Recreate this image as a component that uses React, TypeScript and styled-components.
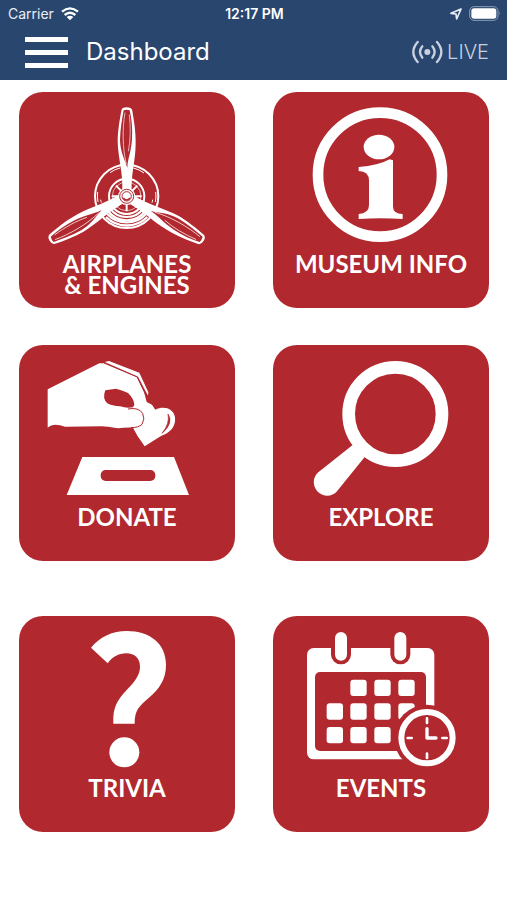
import React from "react";
import styled, { createGlobalStyle } from "styled-components";

const RED = "#b1282f";
const NAVY = "#29466f";

const GlobalStyle = createGlobalStyle`
  *, *::before, *::after { box-sizing: border-box; }
  body { margin: 0; background: #fff; font-family: Inter, "Liberation Sans", sans-serif; }
`;

const Header = styled.header`
  background: ${NAVY};
  color: #fff;
`;

const StatusBar = styled.div`
  display: grid;
  grid-template-columns: 1fr auto 1fr;
  align-items: center;
  height: 27px;
  padding: 0 6px 0 8px;
  font-size: 14px;
  color: #e9eef6;
`;

const StatusGroup = styled.div<{ $end?: boolean }>`
  display: flex;
  align-items: center;
  gap: 7px;
  justify-content: ${(p) => (p.$end ? "flex-end" : "flex-start")};
`;

const Clock = styled.time`
  font-size: 14px;
  font-weight: 600;
  color: #fff;
`;

const NavBar = styled.div`
  display: flex;
  align-items: center;
  height: 53px;
  padding: 0 18px 3px 25px;
`;

const MenuButton = styled.button`
  display: flex;
  flex-direction: column;
  gap: 8px;
  width: 43px;
  padding: 0;
  border: 0;
  background: none;
  cursor: pointer;
`;

const MenuBar = styled.span`
  height: 5px;
  background: #fff;
`;

const Title = styled.h1`
  flex: 1;
  margin: 0 0 0 18px;
  font-family: Inter, sans-serif;
  font-size: 24px;
  font-weight: 400;
  line-height: 32px;
`;

const LiveButton = styled.button`
  display: flex;
  align-items: center;
  gap: 4px;
  padding: 0;
  border: 0;
  background: none;
  color: #c9d1dd;
  font-family: Inter, sans-serif;
  font-size: 20px;
  font-weight: 300;
  line-height: 24px;
  cursor: pointer;
`;

const Board = styled.main`
  display: flex;
  flex-direction: column;
  padding: 12px 18px 68px 19px;
`;

const Row = styled.div<{ $gap: number }>`
  display: grid;
  grid-template-columns: 1fr 1fr;
  column-gap: 38px;
  margin-top: ${(p) => p.$gap}px;
`;

const Tile = styled.a`
  display: flex;
  flex-direction: column;
  aspect-ratio: 1;
  border-radius: 24px;
  overflow: hidden;
  background: ${RED};
  color: #fff;
  text-decoration: none;
`;

const Art = styled.svg`
  display: block;
  width: 100%;
  aspect-ratio: 648 / 483;
`;

const Label = styled.span`
  font-family: Lato, sans-serif;
  font-size: 24px;
  font-weight: 700;
  line-height: 21px;
  text-align: center;
  white-space: pre-line;
`;

const Wifi = () => (
  <svg width="18" height="14" viewBox="0 0 54 42" aria-hidden="true">
    <g fill="none" stroke="#fff" strokeWidth="7">
      <path d="M3 14 Q27 -6 51 14" />
      <path d="M11 24 Q27 10 43 24" />
    </g>
    <path d="M17 30 Q27 22 37 30 L27 40 Z" fill="#fff" />
  </svg>
);

const LocationArrow = () => (
  <svg width="12" height="12" viewBox="0 0 36 36" aria-hidden="true">
    <path d="M33 3 L3 16 L18 18 L20 33 Z" fill="none" stroke="#e9eef6" strokeWidth="5" strokeLinejoin="round" />
  </svg>
);

const Battery = () => (
  <svg width="32" height="15" viewBox="0 0 96 45" aria-hidden="true">
    <rect x="2" y="2" width="85" height="41" rx="13" fill="none" stroke="#8b9cb6" strokeWidth="3" />
    <rect x="7" y="7" width="75" height="31" rx="8" fill="#fff" />
    <path d="M90 16 Q95 22 90 29 Z" fill="#8b9cb6" />
  </svg>
);

const Broadcast = () => (
  <svg width="31" height="24" viewBox="0 0 93 72" aria-hidden="true">
    <circle cx="46" cy="36" r="9" fill="#c9d1dd" />
    <g fill="none" stroke="#c9d1dd" strokeWidth="7" strokeLinecap="round">
      <path d="M31 19 Q17 36 31 53" />
      <path d="M61 19 Q75 36 61 53" />
      <path d="M17 6 Q-9 36 17 66" />
      <path d="M75 6 Q101 36 75 66" />
    </g>
  </svg>
);

const Blade = ({ angle }: { angle: number }) => (
  <g transform={`rotate(${angle} 350 335)`}>
    <path
      d="M334 78 Q336 68 350 68 Q364 68 367 78 C372 110 380 150 376 200 C373 240 364 270 365 318 L337 318 C339 262 324 220 323 170 C323 140 329 105 334 78 Z"
      fill="#fff"
    />
    <path
      d="M341 77 Q350 74 359 77 C365 104 368 132 366 164 C363 205 353 222 352 250 C345 226 331 204 330 166 C331 132 336 104 341 77 Z"
      fill={RED}
    />
    <path d="M345 84 C337 130 337 190 349 238" fill="none" stroke="#fff" strokeWidth="2" />
    <path d="M358 90 C362 130 362 165 355 200" fill="none" stroke="#fff" strokeWidth="2" />
  </g>
);

const Propeller = () => (
  <>
    <g fill="none" stroke="#fff">
      <circle cx="350" cy="335" r="95" strokeWidth="6" />
      <path d="M300 264 A87 87 0 0 1 330 250 M370 250 A87 87 0 0 1 402 265" strokeWidth="3" />
      <path d="M263 322 A87 87 0 0 0 264 352 M437 322 A87 87 0 0 1 436 352" strokeWidth="3" />
      <path d="M272 345 A78 78 0 0 0 274 354 M428 345 A78 78 0 0 1 426 354" strokeWidth="3" />
      <path d="M288 397 A88 88 0 0 0 412 397" strokeWidth="7" />
      <path d="M292 388 A79 79 0 0 0 408 388" strokeWidth="7" />
      <path d="M294 379 A70 70 0 0 0 406 379" strokeWidth="7" />
      <path d="M300 371 A61 61 0 0 0 400 371" strokeWidth="6" />
      <circle cx="350" cy="335" r="53" strokeWidth="6" />
      <circle cx="350" cy="335" r="43" strokeWidth="2" />
      <path
        d="M350 290 V380 M305 335 H395 M318 303 L382 367 M382 303 L318 367"
        strokeWidth="6"
      />
    </g>
    <Blade angle={0} />
    <Blade angle={120} />
    <Blade angle={240} />
    <circle cx="350" cy="335" r="26" fill="#fff" />
    <circle cx="350" cy="335" r="21" fill="none" stroke={RED} strokeWidth="3" />
    <circle cx="350" cy="335" r="14" fill="none" stroke={RED} strokeWidth="3" />
    <path d="M340 340 Q350 352 360 340" fill="none" stroke={RED} strokeWidth="4" />
  </>
);

const Info = () => (
  <>
    <circle cx="345" cy="270" r="186" fill="none" stroke="#fff" strokeWidth="32" />
    <ellipse cx="342" cy="187" rx="46" ry="37" fill="#fff" />
    <path
      d="M281 247 Q340 243 374 224 L384 227 V366 Q384 387 413 388 V403 Q347 398 281 403 V388 Q312 386 312 362 V288 Q312 260 281 259 Z"
      fill="#fff"
    />
  </>
);

const Donate = () => (
  <>
    <path
      d="M113 148 L268 70 L285 70 L380 111 L402 155 L410 186 L426 194 L436 209 C462 197 490 205 495 232 C499 262 476 281 453 288 L404 319 L383 289 L369 263 Q345 262 324 265 Q290 259 276 259 L165 260 Q130 247 113 263 Z"
      fill="#fff"
    />
    <path d="M284 66 L297 63 L388 98 L415 157 L414 167 L384 110 Z" fill="#fff" />
    <path d="M282 69 L382 111 L410 170" fill="none" stroke={RED} strokeWidth="3" />
    <path d="M286 151 L318 146 Q340 151 354 159 Q371 175 373 194 L369 202 Q350 206 330 199 Q306 198 292 190 Q276 176 286 151 Z" fill={RED} />
    <path d="M354 207 Q386 201 398 220 Q406 237 396 253 Q386 263 362 263" fill="none" stroke={RED} strokeWidth="3" />
    <path d="M474 222 Q492 249 456 280 Q480 251 474 222 Z" fill={RED} stroke={RED} strokeWidth="2" />
    <path d="M217 351 H492 L537 465 H170 Z" fill="#fff" />
    <rect x="272" y="390" width="164" height="33" rx="15" fill={RED} />
  </>
);

const Magnifier = () => (
  <>
    <circle cx="391" cy="222" r="140" fill="none" stroke="#fff" strokeWidth="38" />
    <path d="M263 315 L299 351 L216 454 C200 473 172 471 156 453 C142 435 143 412 160 397 Z" fill="#fff" />
  </>
);

const Question = () => (
  <>
    <path
      d="M243 113 C270 80 308 63 350 63 C420 63 468 101 468 164 C468 207 449 236 416 264 C386 290 374 301 374 341 H310 C308 291 321 272 352 238 C379 210 390 191 390 170 C390 145 374 130 349 130 C325 130 307 141 293 160 Z"
      fill="#fff"
    />
    <circle cx="343" cy="427" r="45" fill="#fff" />
  </>
);

const CELLS = [
  [256, 209], [328, 209], [400, 209],
  [185, 280], [256, 280], [328, 280], [400, 280],
  [185, 351], [256, 351], [328, 351],
];

const Calendar = () => (
  <>
    <rect x="126" y="114" width="382" height="334" rx="20" fill="#fff" />
    <rect x="150" y="186" width="333" height="237" rx="15" fill={RED} />
    {[228, 406].map((x) => (
      <g key={x}>
        <rect x={x - 30} y="84" width="60" height="79" rx="30" fill={RED} />
        <rect x={x - 18} y="66" width="36" height="86" rx="18" fill="#fff" />
      </g>
    ))}
    {CELLS.map(([x, y]) => (
      <rect key={`${x}-${y}`} x={x} y={y} width="49" height="49" rx="9" fill="#fff" />
    ))}
    <circle cx="486" cy="383" r="99" fill={RED} />
    <circle cx="486" cy="383" r="77" fill="none" stroke="#fff" strokeWidth="18" />
    <g fill="none" stroke="#fff" strokeLinecap="round" strokeLinejoin="round">
      <path d="M486 356 V384 H513" strokeWidth="10" />
      <path d="M486 325 V339 M486 431 V444 M428 384 H440 M532 384 H545" strokeWidth="8" />
    </g>
  </>
);

const ROWS = [
  {
    gap: 0,
    top: 22,
    tiles: [
      { label: "AIRPLANES\n& ENGINES", href: "#airplanes", Icon: Propeller },
      { label: "MUSEUM INFO", href: "#info", Icon: Info },
    ],
  },
  {
    gap: 37,
    top: 15,
    tiles: [
      { label: "DONATE", href: "#donate", Icon: Donate },
      { label: "EXPLORE", href: "#explore", Icon: Magnifier },
    ],
  },
  {
    gap: 55,
    top: 18,
    tiles: [
      { label: "TRIVIA", href: "#trivia", Icon: Question },
      { label: "EVENTS", href: "#events", Icon: Calendar },
    ],
  },
];

export default function App() {
  return (
    <>
      <GlobalStyle />
      <Header>
        <StatusBar>
          <StatusGroup>
            <span>Carrier</span>
            <Wifi />
          </StatusGroup>
          <Clock>12:17 PM</Clock>
          <StatusGroup $end>
            <LocationArrow />
            <Battery />
          </StatusGroup>
        </StatusBar>
        <NavBar>
          <MenuButton type="button" aria-label="Open menu">
            <MenuBar />
            <MenuBar />
            <MenuBar />
          </MenuButton>
          <Title>Dashboard</Title>
          <LiveButton type="button">
            <Broadcast />
            LIVE
          </LiveButton>
        </NavBar>
      </Header>
      <Board>
        {ROWS.map((row) => (
          <Row key={row.gap} $gap={row.gap}>
            {row.tiles.map(({ label, href, Icon }, column) => (
              <Tile key={href} href={href}>
                <Art viewBox={`${column === 0 ? 27 : 24} ${row.top} 648 483`} aria-hidden="true">
                  <Icon />
                </Art>
                <Label>{label}</Label>
              </Tile>
            ))}
          </Row>
        ))}
      </Board>
    </>
  );
}
